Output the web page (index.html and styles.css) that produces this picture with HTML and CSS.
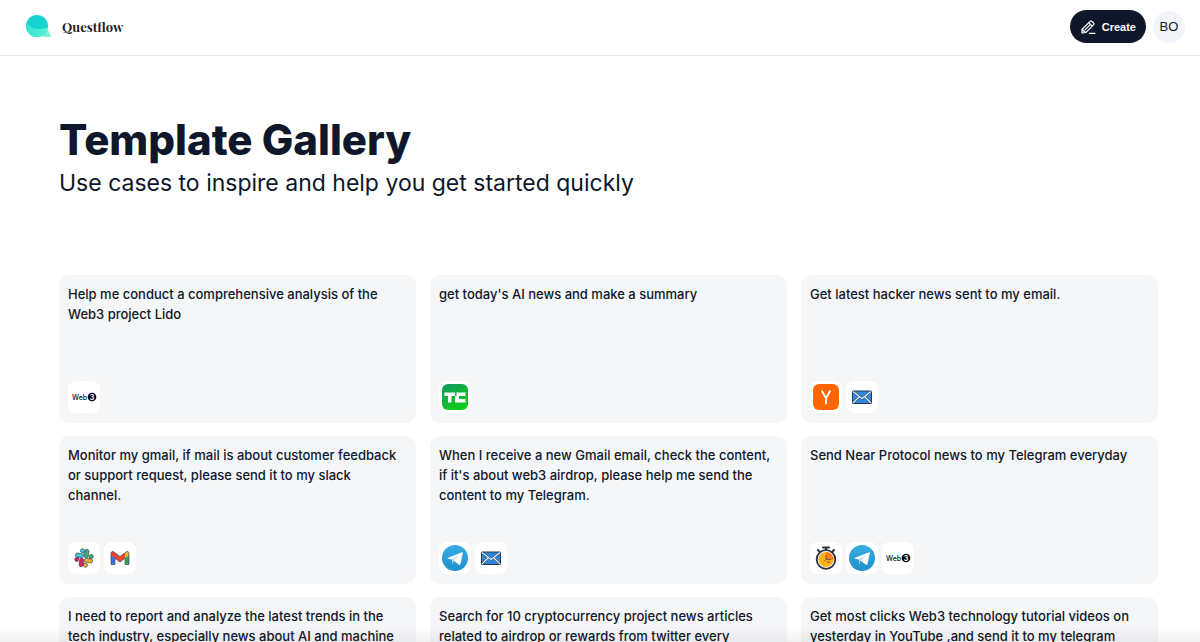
FILE: index.html
```html
<!DOCTYPE html>
<html lang="en">
<head>
<meta charset="utf-8">
<meta name="viewport" content="width=device-width, initial-scale=1">
<title>Template Gallery</title>
<link rel="stylesheet" href="styles.css">
</head>
<body>
<svg class="sprite" aria-hidden="true">
  <defs>
    <linearGradient id="tg" x1="0" y1="0" x2="0" y2="1"><stop offset="0" stop-color="#37aee2"/><stop offset="1" stop-color="#1e8fcb"/></linearGradient>
    <linearGradient id="tcg" x1="0.2" y1="0" x2="0.8" y2="1"><stop offset="0" stop-color="#109c5c"/><stop offset="1" stop-color="#0fd016"/></linearGradient>
    <linearGradient id="bubble" x1="0" y1="0" x2="1" y2="0.3"><stop offset="0" stop-color="#2fe3d2"/><stop offset="1" stop-color="#5cf0d3"/></linearGradient>
    <clipPath id="drop"><circle cx="11" cy="11" r="11"/></clipPath>
    <symbol id="web3" viewBox="0 0 32 32">
      <text x="4" y="19" class="web3-word">Web</text>
      <circle cx="24" cy="16" r="4.300" fill="#050505"/>
      <text x="24" y="18.600" class="web3-digit">3</text>
    </symbol>
    <symbol id="tc" viewBox="0 0 32 32">
      <rect x="3" y="3" width="26" height="26" rx="6" fill="url(#tcg)"/>
      <path fill="#fff" d="M5.500 11.500H16V15h-3.500v6.500H9V15H5.500zM17.500 11.500h9V15H20v3h6.500v3.500H16V15h1.500z"/>
    </symbol>
    <symbol id="yc" viewBox="0 0 32 32">
      <rect x="3" y="3" width="26" height="26" rx="6" fill="#ff6600"/>
      <path d="M11.700 9.500 16 17.300 20.300 9.500M16 17.300v6" fill="none" stroke="#fff" stroke-width="1.800"/>
    </symbol>
    <symbol id="mail" viewBox="0 0 32 32">
      <rect x="6.500" y="10" width="19" height="12.500" rx=".5" fill="#2f86dc" stroke="#24384f"/>
      <path d="M7 10.500 16 17.500 25 10.500M7 22l6.500-6.500M25 22l-6.500-6.500" fill="none" stroke="#24384f" stroke-width="2"/>
      <path d="M7 10.500 16 17.500 25 10.500M7 22l6.500-6.500M25 22l-6.500-6.500" fill="none" stroke="#f2f7fc" stroke-width="1.200"/>
    </symbol>
    <symbol id="slack" viewBox="0 0 32 32">
      <g transform="rotate(8 16 16)" stroke="#333b48" stroke-width=".6">
        <path fill="#3cc4e8" d="M13.500 7a2 2 0 0 1 2 2v2h-2a2 2 0 0 1 0-4zM9 12h4.500a2 2 0 0 1 0 4H9a2 2 0 0 1 0-4z"/>
        <path fill="#32b67a" d="M25 13.500a2 2 0 0 1-2 2h-2v-2a2 2 0 0 1 4 0zM20 9v4.500a2 2 0 0 1-4 0V9a2 2 0 0 1 4 0z"/>
        <path fill="#ecb22e" d="M18.500 25a2 2 0 0 1-2-2v-2h2a2 2 0 0 1 0 4zM23 20h-4.500a2 2 0 0 1 0-4H23a2 2 0 0 1 0 4z"/>
        <path fill="#df1f63" d="M7 18.500a2 2 0 0 1 2-2h2v2a2 2 0 0 1-4 0zM12 23v-4.500a2 2 0 0 1 4 0V23a2 2 0 0 1-4 0z"/>
      </g>
    </symbol>
    <symbol id="gmail" viewBox="0 0 32 32">
      <path fill="#3675d8" d="M7 12v10.500h4v-7.500z"/>
      <path fill="#2fa653" d="M25 12v10.500h-4v-7.500z"/>
      <path fill="#e84435" d="M7 11.500c0-2 1.600-2.600 3-1.500l6 4.500 5-3.800v5.500L16 20l-5-3.800L7 13z"/>
      <path fill="#f0b62a" d="M21 10.800 22 10c1.400-1.100 3-.5 3 1.500V13l-4 3.200z"/>
      <path d="M7 22.500v-11c0-2 1.600-2.600 3-1.500l6 4.500 6-4.500c1.400-1.100 3-.5 3 1.500v11h-4v-6.300L16 20l-5-3.800v6.300z" fill="none" stroke="#444850" stroke-width=".7"/>
    </symbol>
    <symbol id="telegram" viewBox="0 0 32 32">
      <circle cx="16" cy="16" r="13" fill="url(#tg)"/>
      <path fill="#fff" d="M8.500 16 23 10.200c.7-.2 1.100.1.900.9l-2.400 11c-.2.800-.7 1-1.400.6L12.800 17.600 8.600 16.500z"/>
      <path fill="#b9d7ea" d="m12.800 17.600 7.800-5-6.300 6.200-.2 3.400c-.5 0-.6-.3-.7-.7z"/>
    </symbol>
    <symbol id="timer" viewBox="0 0 32 32">
      <path d="M13 5.500h6M16 5.500v3M8 8l2.300 2.300M24 8l-2.300 2.300" stroke="#293541" stroke-width="2" fill="none" stroke-linecap="round"/>
      <circle cx="16" cy="17.500" r="9.300" fill="#fff" stroke="#293541" stroke-width="1.800"/>
      <circle cx="16" cy="17.500" r="7.600" fill="#fbb01c"/>
      <path fill="#ff7b20" d="M16 17.500V9.900a7.600 7.600 0 0 1 7.600 7.600z"/>
      <path d="M16 13v4.500h5M16 17.500l-2 2M20 20h-3" stroke="#7b5b28" fill="none"/>
    </symbol>
  </defs>
</svg>
<div class="app">
  <header class="topbar">
    <a class="brand" href="#">
      <svg class="brand-mark" viewBox="0 0 26 24" aria-hidden="true">
        <path fill="#7af5d4" d="M18 15c3-1 5 1 5.500 3 .3 1.500 1 2.500 2.200 4-4 .3-8 0-11-1.200z"/>
        <circle cx="11" cy="11" r="11" fill="#17d3cf"/>
        <path clip-path="url(#drop)" fill="url(#bubble)" d="M0 6c3 8 12 10 24 6v12H0z"/>
      </svg>
      <span>Questflow</span>
    </a>
    <div class="actions">
      <button class="create" type="button">
        <svg class="pen" viewBox="0 0 16 16" aria-hidden="true"><path d="M2 10.500 10.300 2.200a1 1 0 0 1 1.400 0l2 2a1 1 0 0 1 0 1.400L6 13.300 2 14zM8.800 3.700l3.400 3.400M5 10.800l5-5M2 10.500l3.500 3M9.500 14.300H15" fill="none" stroke="currentColor" stroke-width="1.200" stroke-linejoin="round" stroke-linecap="round"/></svg>
        Create
      </button>
      <button class="avatar" type="button">BO</button>
    </div>
  </header>
  <main class="gallery">
    <h1>Template Gallery</h1>
    <p class="lead">Use cases to inspire and help you get started quickly</p>
    <section class="cards">
      <article class="card"><p>Help me conduct a comprehensive analysis of the Web3 project Lido</p><div class="tools"><svg><use href="#web3"/></svg></div></article>
      <article class="card"><p>get today's AI news and make a summary</p><div class="tools"><svg><use href="#tc"/></svg></div></article>
      <article class="card"><p>Get latest hacker news sent to my email.</p><div class="tools"><svg><use href="#yc"/></svg><svg><use href="#mail"/></svg></div></article>
      <article class="card"><p>Monitor my gmail, if mail is about customer feedback or support request, please send it to my slack channel.</p><div class="tools"><svg><use href="#slack"/></svg><svg><use href="#gmail"/></svg></div></article>
      <article class="card"><p>When I receive a new Gmail email, check the content, if it's about web3 airdrop, please help me send the content to my Telegram.</p><div class="tools"><svg><use href="#telegram"/></svg><svg><use href="#mail"/></svg></div></article>
      <article class="card"><p>Send Near Protocol news to my Telegram everyday</p><div class="tools"><svg><use href="#timer"/></svg><svg><use href="#telegram"/></svg><svg><use href="#web3"/></svg></div></article>
      <article class="card"><p>I need to report and analyze the latest trends in the tech industry, especially news about AI and machine</p></article>
      <article class="card"><p>Search for 10 cryptocurrency project news articles related to airdrop or rewards from twitter every</p></article>
      <article class="card"><p>Get most clicks Web3 technology tutorial videos on yesterday in YouTube ,and send it to my telegram</p></article>
    </section>
  </main>
  <div class="fade"></div>
</div>
</body>
</html>
```
FILE: styles.css
```css
* { box-sizing: border-box; }

body {
  margin: 0;
  background: #fff;
  color: #0f172a;
  font-family: Inter, "Liberation Sans", sans-serif;
}

.sprite { position: absolute; width: 0; height: 0; }

.app {
  position: relative;
  display: flex;
  flex-direction: column;
  height: 100vh;
  overflow: hidden;
}

.topbar {
  display: flex;
  flex: none;
  align-items: center;
  justify-content: space-between;
  padding: 10px 15px 12px 26px;
  border-bottom: 1px solid #e6e7ee;
}

.brand {
  display: flex;
  align-items: center;
  gap: 10px;
  color: #222;
  font-family: "Playfair Display", "Liberation Serif", serif;
  font-size: 13px;
  font-weight: 700;
  text-decoration: none;
}

.brand-mark { width: 26px; height: 24px; }

.actions { display: flex; align-items: center; gap: 7px; }

button { border: 0; cursor: pointer; }

.create {
  display: flex;
  align-items: center;
  gap: 6px;
  height: 33px;
  padding: 0 10px;
  border-radius: 17px;
  background: #0f172a;
  color: #fff;
  font: 700 11px/16px "Liberation Sans", Arial, sans-serif;
}

.pen { width: 16px; height: 16px; }

.avatar {
  width: 32px;
  height: 32px;
  padding: 0;
  border-radius: 50%;
  background: #f1f5f9;
  color: #0f172a;
  font: 13px/20px "Liberation Sans", Arial, sans-serif;
}

.gallery {
  flex: 1;
  min-height: 0;
  padding: 60px 42px 0 59px;
  overflow-y: auto;
  scrollbar-width: none;
}

h1 {
  margin: 0;
  font-size: 42px;
  line-height: 48px;
  font-weight: 800;
}

.lead {
  margin: 3px 0 76px;
  font-size: 23px;
  line-height: 32px;
}

.cards {
  display: grid;
  grid-template-columns: repeat(3, 1fr);
  grid-auto-rows: minmax(148px, auto);
  gap: 13px 14px;
}

.card {
  display: flex;
  flex-direction: column;
  justify-content: space-between;
  padding: 9px 10px 10px 9px;
  border-radius: 10px;
  background: #f5f6f8;
}

.card p {
  margin: 0;
  font-size: 13px;
  line-height: 20px;
  font-weight: 500;
}

.tools { display: flex; gap: 4px; }

.tools svg {
  width: 32px;
  height: 32px;
  border-radius: 8px;
  background: #fff;
}

.web3-word { font: 500 7px Inter, sans-serif; fill: #111; }

.web3-digit {
  font: 700 7px Inter, sans-serif;
  fill: #fff;
  text-anchor: middle;
}

.fade {
  position: absolute;
  inset: auto 0 0;
  height: 16px;
  background: linear-gradient(transparent, rgb(0 0 0 / 5%));
  pointer-events: none;
}
```
